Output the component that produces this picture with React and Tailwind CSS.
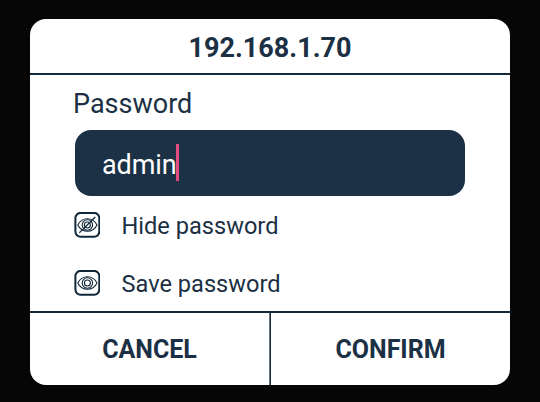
function Toggle({ label, crossed }) {
  return (
    <label className="flex h-[26px] items-center text-[23.6px] leading-[26px] whitespace-nowrap">
      <svg
        className="mr-[21.5px] -ml-px h-[26px] w-[26px] shrink-0"
        viewBox="0 0 26 26"
        fill="none"
        stroke="#10273a"
        strokeWidth="1.1"
      >
        <rect x="1.4" y="0.9" width="23.9" height="23.9" rx="5.2" strokeWidth="2" />
        <path d="M3.8 13C5.8 9 9.2 6.7 13.4 6.7S21 9 23 13C21 17 17.6 19.3 13.4 19.3S5.8 17 3.8 13Z" />
        <circle cx="13.4" cy="13" r="5.2" />
        <circle cx="13.4" cy="13" r="3" />
        {crossed && <path d="M5.3 20.9L21.3 5" strokeWidth="1.3" />}
      </svg>
      <span className="mt-[2px]">{label}</span>
    </label>
  );
}

export default function App() {
  return (
    <main className="h-[402px] w-[540px] bg-[#060606] px-[30px] pt-[19px] font-['Roboto','Noto_Sans',sans-serif] text-[#1b3044]">
      <section className="flex h-[365.5px] flex-col overflow-hidden rounded-[16px] bg-white">
        <header className="flex h-[56px] items-center justify-center border-b-2 border-[#13293c] pt-[5px] text-[27px] font-bold">
          192.168.1.70
        </header>
        <div className="h-[236px] pt-[13px] pr-[45px] pl-[45px]">
          <div className="-ml-[2px] h-[32px] text-[27px] leading-[32px]">Password</div>
          <div className="mt-[9.5px] flex h-[66.5px] items-center rounded-[16px] bg-[#1c3146] pl-[27px] text-[27px] text-white">
            <span className="mt-[5px] -mr-px tracking-[-0.1px]">admin</span>
            <span className="h-[37px] w-[3px] bg-[#e34c83]" />
          </div>
          <div className="mt-[16px] flex flex-col gap-[31.6px]">
            <Toggle label="Hide password" crossed />
            <Toggle label="Save password" />
          </div>
        </div>
        <footer className="grid flex-1 grid-cols-2 border-t-2 border-[#13293c] text-[25px] font-bold">
          <button className="border-r border-[#6c7a86] pt-[2px]">CANCEL</button>
          <button className="border-l border-[#13293c] pt-[2px]">CONFIRM</button>
        </footer>
      </section>
    </main>
  );
}
